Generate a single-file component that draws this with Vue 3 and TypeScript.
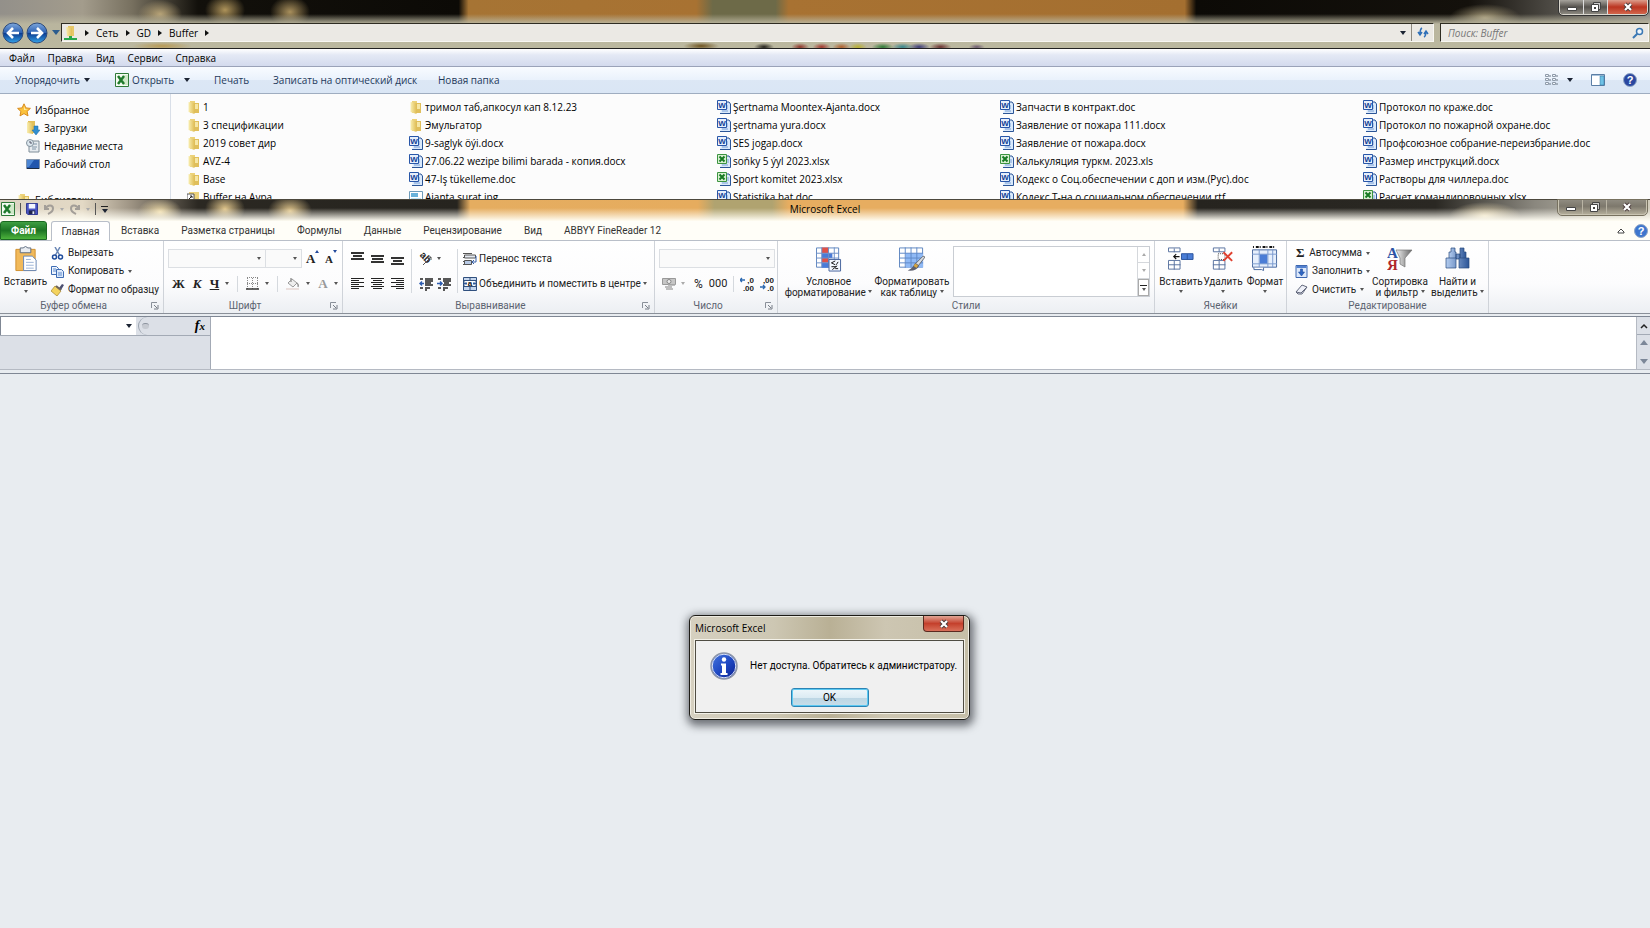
<script setup lang="ts">
type Kind = 'folder' | 'word' | 'excel' | 'image' | 'shortcut'
interface FileItem { name: string; kind: Kind }

const f = (kind: Kind, name: string): FileItem => ({ kind, name })

const columns: FileItem[][] = [
  [f('folder', '1'), f('folder', '3 спецификации'), f('folder', '2019 совет дир'), f('folder', 'AVZ-4'), f('folder', 'Base'), f('shortcut', 'Buffer на Аура')],
  [f('folder', 'тримол таб,апкосул кап 8.12.23'), f('folder', 'Эмульгатор'), f('word', '9-saglyk öýi.docx'), f('word', '27.06.22 wezipe bilimi barada - копия.docx'), f('word', '47-Iş tükelleme.doc'), f('image', 'Ajanta surat.jpg')],
  [f('word', 'Şertnama Moontex-Ajanta.docx'), f('word', 'şertnama yura.docx'), f('word', 'SES jogap.docx'), f('excel', 'soňky 5 ýyl 2023.xlsx'), f('excel', 'Sport komitet 2023.xlsx'), f('word', 'Statistika hat.doc')],
  [f('word', 'Запчасти в контракт.doc'), f('word', 'Заявление от пожара 111.docx'), f('word', 'Заявление от пожара.docx'), f('excel', 'Калькуляция туркм. 2023.xls'), f('word', 'Кодекс о Соц.обеспечении с доп и изм.(Рус).doc'), f('word', 'Кодекс Т-на о социальном обеспечении.rtf')],
  [f('word', 'Протокол по краже.doc'), f('word', 'Протокол по пожарной охране.doc'), f('word', 'Профсоюзное собрание-переизбрание.doc'), f('word', 'Размер инструкций.docx'), f('word', 'Растворы для чиллера.doc'), f('excel', 'Расчет командировочных.xlsx')],
]

const crumbs = ['Сеть', 'GD', 'Buffer']
const menu = ['Файл', 'Правка', 'Вид', 'Сервис', 'Справка']
const places = [
  { icon: 'downloads', name: 'Загрузки' },
  { icon: 'recent', name: 'Недавние места' },
  { icon: 'desktop', name: 'Рабочий стол' },
]
const tabs = ['Вставка', 'Разметка страницы', 'Формулы', 'Данные', 'Рецензирование', 'Вид', 'ABBYY FineReader 12']
</script>

<template>
  <svg class="sprite" aria-hidden="true">
    <defs>
      <linearGradient id="gFolder" x1="0" x2="1"><stop offset="0" stop-color="#f9eeb0" /><stop offset="1" stop-color="#dfbd55" /></linearGradient>
      <linearGradient id="gBlue" x1="0" x2="0" y1="0" y2="1"><stop offset="0" stop-color="#7fa8dc" /><stop offset=".48" stop-color="#2d62b4" /><stop offset=".52" stop-color="#0d3d90" /><stop offset="1" stop-color="#35a4ea" /></linearGradient>
      <linearGradient id="gInfo" x1="0" x2="1" y1="0" y2="1"><stop offset="0" stop-color="#4a7be0" /><stop offset=".5" stop-color="#1f49c4" /><stop offset="1" stop-color="#0b1f8e" /></linearGradient>
      <linearGradient id="gBin" x1="0" x2="1"><stop offset="0" stop-color="#b4cdf0" /><stop offset="1" stop-color="#2c5597" /></linearGradient>
      <linearGradient id="gFunnel" x1="0" x2="1"><stop offset="0" stop-color="#f2f2f2" /><stop offset="1" stop-color="#666" /></linearGradient>
      <symbol id="folder" viewBox="0 0 14 14"><path d="M3 1h5v12H3z" fill="#ecd27a" /><path d="M7 3h5v10H7z" fill="#e0bf5c" /><path d="M1.500 2l6 1v11l-6-2z" fill="url(#gFolder)" /><path d="M8 4h3v5H8z" fill="#f6e7a6" /></symbol>
      <symbol id="shortcut" viewBox="0 0 14 14"><path d="M2 2h10v11H2z" fill="#ecd27a" /><path d="M0 4h7v8H0z" fill="#fff" stroke="#555" /><path d="M2 9l3-3M3 6h2v2" stroke="#222" fill="none" /></symbol>
      <symbol id="word" viewBox="0 0 14 14"><path d="M6 2h6l1.500 2v9.500H3" fill="#d9e9fb" stroke="#2b5597" /><path d="M7 6h4M7 8h4M5 11h6" stroke="#7ba0d6" /><path d="M.5.500h9v9h-9z" fill="#e6effb" stroke="#2856a8" /><text x="5" y="8" text-anchor="middle" font-size="8" font-weight="700" font-family="Liberation Sans" fill="#123f96">W</text></symbol>
      <symbol id="excel" viewBox="0 0 14 14"><path d="M6 2h6l1.500 2v9.500H3" fill="#dceafa" stroke="#2b5597" /><path d="M9 6h3M9 8h3M5 11h6" stroke="#7ba0d6" /><path d="M.5.500h9v9h-9z" fill="#d9f0d2" stroke="#3c9440" /><path d="M2.500 2.500l5 5m0-5l-5 5" stroke="#177a22" stroke-width="2" /></symbol>
      <symbol id="image" viewBox="0 0 14 14"><path d="M.5 1.500h13v11H.5z" fill="#fff" stroke="#6e9cba" /><path d="M2 3h7v4H2z" fill="#68b2da" /><path d="M2 8h10v3H2z" fill="#bfe4f5" /></symbol>
      <symbol id="network" viewBox="0 0 14 14"><path d="M4 0h6v10H4z" fill="#e7c868" /><path d="M2 1l6 1v9l-5-1z" fill="url(#gFolder)" /><path d="M5 10h3v2h5v2H0v-2h5z" fill="#28a84b" /></symbol>
      <symbol id="xl" viewBox="0 0 14 14"><path d="M.5.500h13v13H.5z" fill="#f4fbf1" stroke="#2f7a38" /><path d="M8 2h5v10H8z" fill="#cfe8c8" /><path d="M3 3l6 8M9 3l-6 8" stroke="#1f7a2b" stroke-width="2.500" /></symbol>
      <symbol id="star" viewBox="0 0 14 14"><path d="M7 .8l1.900 4.100 4.500.5-3.300 3 .9 4.500L7 10.600l-4 2.300.9-4.500-3.300-3 4.500-.5z" fill="#fbc23c" stroke="#d88a1c" /><path d="M7 3l1 3 3 .5-4 .5z" fill="#fff0b0" /></symbol>
      <symbol id="downloads" viewBox="0 0 14 14"><path d="M2 0h7v12H2z" fill="#e3bf58" /><path d="M1 1l6 1v11l-6-1z" fill="url(#gFolder)" /><path d="M8 5h4v4h2l-4 5-4-5h2z" fill="#2f8ed0" stroke="#1a68a6" stroke-width=".5" /></symbol>
      <symbol id="recent" viewBox="0 0 14 14"><path d="M3 2h10v11H3z" fill="#e6ebef" stroke="#7f8d98" /><path d="M6 5h5M6 8h5M6 10h4" stroke="#8196a8" /><circle cx="4" cy="4" r="3.500" fill="#dde8ef" stroke="#84929d" /><path d="M4 2v2h2" stroke="#556" fill="none" /></symbol>
      <symbol id="desktop" viewBox="0 0 14 14"><path d="M.5 2.500h13v9H.5z" fill="#2156ae" stroke="#7e92ac" /><path d="M1 3h7L3 10H1z" fill="#4c86d4" /><path d="M1 11h12v1H1z" fill="#1c2a40" /></symbol>
      <symbol id="magnifier" viewBox="0 0 12 12"><circle cx="7.500" cy="4.500" r="3" fill="#eef5fb" stroke="#3a78b4" stroke-width="1.500" /><path d="M5.300 6.700L1 11" stroke="#3a78b4" stroke-width="2" /></symbol>
      <symbol id="refresh" viewBox="0 0 12 12"><path d="M5 1C3 2 3 4 3 7M1 5l2 3 2-3M7 10c2-1 2-3 2-6M7 7l2-3 2 3" stroke="#2f70b8" stroke-width="1.500" fill="none" /></symbol>
      <symbol id="views" viewBox="0 0 14 12"><g fill="#f3f7fc" stroke="#8e9aa9"><path d="M1.500.500h3v2h-3zM1.500 4.500h3v2h-3zM1.500 8.500h3v2h-3zM8.500.500h3v2h-3zM8.500 4.500h3v2h-3zM8.500 8.500h3v2h-3z" /></g><path d="M5 2h2M5 6h2M5 10h2M12 2h2M12 6h2M12 10h2" stroke="#6d7886" /></symbol>
      <symbol id="pane" viewBox="0 0 14 12"><path d="M.5.500h13v11H.5z" fill="#fff" stroke="#5b7ea5" /><path d="M1 1h12v1H1z" fill="#aac4dd" /><path d="M9 2h4v9H9z" fill="#6ec1e6" stroke="#32749c" stroke-width=".5" /></symbol>
      <symbol id="helpDark" viewBox="0 0 14 14"><circle cx="7" cy="7" r="6.500" fill="#2a47a0" stroke="#8fa5c4" /><text x="7" y="11" text-anchor="middle" font-size="11" font-weight="700" font-family="Liberation Sans" fill="#fff">?</text></symbol>
      <symbol id="help" viewBox="0 0 14 14"><circle cx="7" cy="7" r="6.500" fill="#3e76ce" stroke="#8fa5c4" /><text x="7" y="11" text-anchor="middle" font-size="11" font-weight="700" font-family="Liberation Sans" fill="#fff">?</text></symbol>
      <symbol id="min" viewBox="0 0 12 12"><path d="M1.500 6.500h9v3h-9z" fill="#fff" stroke="#444" /></symbol>
      <symbol id="restore" viewBox="0 0 12 12"><path d="M3.500 1.500h7v7h-7z" fill="#ccc" stroke="#444" /><path d="M1.500 3.500h7v7h-7z" fill="#fff" stroke="#444" /><path d="M4 6h2v2H4z" fill="#444" /></symbol>
      <symbol id="close" viewBox="0 0 12 12"><path d="M3 3l6 6M9 3L3 9" stroke="#4a3a3a" stroke-width="4" /><path d="M3 3l6 6M9 3L3 9" stroke="#fff" stroke-width="2.200" /></symbol>
      <symbol id="save" viewBox="0 0 13 13"><path d="M.5.500h12v12H2l-1.500-1.500z" fill="#4a55c4" stroke="#27308c" /><path d="M3 1h7v5H3z" fill="#f3f6ff" /><path d="M3 8h7v4H3z" fill="#20264e" /><path d="M7 9h2v3H7z" fill="#dfe5f5" /></symbol>
      <symbol id="undo" viewBox="0 0 12 12"><path d="M2 2v4h4M2.500 5.500C5 1 10 2 10 5.500S7 10 5 11" fill="none" stroke="#a39e98" stroke-width="2" /></symbol>
      <symbol id="redo" viewBox="0 0 12 12"><path d="M10 2v4H6M9.500 5.500C7 1 2 2 2 5.500S5 10 7 11" fill="none" stroke="#a39e98" stroke-width="2" /></symbol>
      <symbol id="paste" viewBox="0 0 24 27"><path d="M1.500 3.500h20v22h-20z" fill="#f1b95a" stroke="#cf8f2e" /><path d="M6 2h3q2.500-3 5 0h3v5H6z" fill="#e9edf2" stroke="#5e6c80" /><path d="M9.500 10.500h9l4 4v11h-13z" fill="#fff" stroke="#6886b4" /><path d="M12 14h5M12 17h8M12 20h8M12 23h8" stroke="#9db4d6" /></symbol>
      <symbol id="cut" viewBox="0 0 13 13"><path d="M4 0l4.500 8M9 0L4.500 8" stroke="#6a87b5" stroke-width="1.500" /><circle cx="3.500" cy="10" r="2" fill="none" stroke="#1e4c9c" stroke-width="1.500" /><circle cx="9.500" cy="10" r="2" fill="none" stroke="#1e4c9c" stroke-width="1.500" /></symbol>
      <symbol id="copy" viewBox="0 0 13 13"><path d="M.5 1.500h5l2 2v6h-7z" fill="#eef4fd" stroke="#3e6cb4" /><path d="M5.500 4.500h5l2 2v6h-7z" fill="#dbe8fa" stroke="#3e6cb4" /><path d="M7 8h4M7 10h4M2 4h3M2 6h3" stroke="#5d89cc" /></symbol>
      <symbol id="brush" viewBox="0 0 13 13"><path d="M8 5l3-4 2 1-3 5z" fill="#4a4e70" /><path d="M4 3l6 5-4 5-6-5z" fill="#f4d35e" stroke="#a5842d" stroke-width=".7" /><path d="M5 3l5 4" stroke="#6e655c" stroke-width="2" /></symbol>
      <symbol id="launch" viewBox="0 0 8 8"><path d="M.5 6V.5H6" fill="none" stroke="#8a9099" /><path d="M3 3l3 3M7 3v4H3" fill="none" stroke="#777d86" /></symbol>
      <symbol id="borders" viewBox="0 0 13 13"><path d="M1 .5h11M1 6.500h11M1.500 1v11M6.500 1v11M11.500 1v11" stroke="#888" stroke-dasharray="1 1" /><path d="M0 12h13" stroke="#333" stroke-width="1.500" /></symbol>
      <symbol id="fill" viewBox="0 0 14 14"><path d="M2 6l4-4 5 4-4 4z" fill="#eee" stroke="#999" /><path d="M5 5V1M11 6q2 2 1 4" stroke="#999" stroke-width="1.500" fill="none" /><path d="M0 11h13v2H0z" fill="#eadfdd" /></symbol>
      <symbol id="top" viewBox="0 0 13 13"><path d="M0 1h13M2 4h9M0 7h13" stroke="#333" stroke-width="2" /></symbol>
      <symbol id="middle" viewBox="0 0 13 13"><path d="M0 4h13M1 7h11M0 10h13" stroke="#333" stroke-width="2" /></symbol>
      <symbol id="bottom" viewBox="0 0 13 13"><path d="M0 6h13M2 9h9M0 12h13" stroke="#333" stroke-width="2" /></symbol>
      <symbol id="left" viewBox="0 0 13 13"><path d="M0 1.500h13M0 3.500h8M0 5.500h13M0 7.500h8M0 9.500h13M0 11.500h8" stroke="#222" /></symbol>
      <symbol id="center" viewBox="0 0 13 13"><path d="M0 1.500h13M2 3.500h9M0 5.500h13M2 7.500h9M0 9.500h13M2 11.500h9" stroke="#222" /></symbol>
      <symbol id="right" viewBox="0 0 13 13"><path d="M0 1.500h13M5 3.500h8M0 5.500h13M5 7.500h8M0 9.500h13M5 11.500h8" stroke="#222" /></symbol>
      <symbol id="outdent" viewBox="0 0 14 13"><path d="M1 1.500h3M6 1.500h8M6 3.500h8M6 5.500h6M6 7.500h8M1 10.500h3M6 10.500h5M6 12.500h2" stroke="#222" stroke-width="1.300" /><path d="M5 6H1m2-2L1 6l2 2" stroke="#2d5cb0" fill="none" stroke-width="1.500" /></symbol>
      <symbol id="indent" viewBox="0 0 14 13"><path d="M1 1.500h3M6 1.500h8M6 3.500h8M7 5.500h5M6 7.500h8M1 10.500h3M6 10.500h5M6 12.500h2" stroke="#222" stroke-width="1.300" /><path d="M0 6h5M3 4l2 2-2 2" stroke="#2d5cb0" fill="none" stroke-width="1.500" /></symbol>
      <symbol id="orient" viewBox="0 0 14 14"><text x="0" y="6" transform="rotate(45 3 5)" font-size="10" font-weight="700" font-family="Liberation Sans" fill="#222">ab</text><path d="M4 13l8-8M9 5h3v3" stroke="#555" fill="none" /></symbol>
      <symbol id="wrap" viewBox="0 0 14 14"><path d="M0 1.500h9M0 5.500h9M0 9.500h7M0 12.500h7" stroke="#555" /><path d="M1.500 3h11v3h-11z" fill="#e4e9f1" stroke="#555" /><path d="M1.500 8.500h7v4h-7z" fill="#b8cae6" stroke="#555" /><path d="M13 4v6H9m2-2l-2 2 2 2" fill="none" stroke="#355fa8" /></symbol>
      <symbol id="merge" viewBox="0 0 14 14"><path d="M.5.500h13v13H.5zM7 0v3M7 10v4" fill="#c5d6ee" stroke="#30507e" /><path d="M1 3.500h12v6H1z" fill="#fff" stroke="#30507e" /><path d="M1 6.500h3M10 6.500h3M3 5v3M11 5v3" stroke="#315b9d" /><text x="7" y="9" text-anchor="middle" font-size="8" font-weight="700" font-family="Liberation Sans" fill="#111">a</text></symbol>
      <symbol id="money" viewBox="0 0 14 14"><path d="M.5 1.500h13v6H.5z" fill="#c6c6c6" stroke="#999" /><circle cx="7" cy="4.500" r="2" fill="#eee" stroke="#888" /><path d="M3 10h7M4 12h7M6 8h7" stroke="#aaa" stroke-width="1.500" /></symbol>
      <symbol id="decInc" viewBox="0 0 14 14"><path d="M0 3h5M2 1L0 3l2 2" stroke="#2c69b0" fill="none" stroke-width="1.300" /><text x="14" y="6" text-anchor="end" font-size="8" font-weight="700" font-family="Liberation Sans" fill="#222">,0</text><text x="14" y="14" text-anchor="end" font-size="8" font-weight="700" font-family="Liberation Sans" fill="#222">,00</text></symbol>
      <symbol id="decDec" viewBox="0 0 14 14"><path d="M0 10h5M3 8l2 2-2 2" stroke="#2c69b0" fill="none" stroke-width="1.300" /><text x="14" y="6" text-anchor="end" font-size="8" font-weight="700" font-family="Liberation Sans" fill="#222">,00</text><text x="14" y="14" text-anchor="end" font-size="8" font-weight="700" font-family="Liberation Sans" fill="#222">,0</text></symbol>
      <symbol id="cond" viewBox="0 0 27 26"><path d="M.5 1.500h23v20H.5z" fill="#fff" stroke="#5d84be" /><path d="M6 1h7v6H6zM6 12h7v5H6z" fill="#df5148" /><path d="M6 7h11v5H6zM6 17h7v5H6z" fill="#4a7bd8" /><path d="M0 7h24M0 12h24M0 17h24M6 1v21M13 1v21M19 1v21" stroke="#6d90c8" /><path d="M13.500 13.500h12v12h-12z" fill="#f4f8ff" stroke="#45639c" /><path d="M20 15l-4 2 4 2M16 21h5M23 16l-2 3M17 24l5-4M23 23h-3" stroke="#111" fill="none" /></symbol>
      <symbol id="table" viewBox="0 0 27 26"><path d="M.5 1.500h24v20H.5z" fill="#fff" stroke="#5d84be" /><path d="M7 7h18v15H7z" fill="#8fb9f5" /><path d="M0 7h25M0 12h25M0 17h25M6.500 1v21M12.500 1v21M18.500 1v21" stroke="#5f88c8" /><path d="M25 10l2 1-7 9-3-2z" fill="#d9dde3" stroke="#555" stroke-width=".8" /><path d="M17 17l4 3q-3 6-12 5 5-2 8-8z" fill="#5e6170" /><path d="M16 19l3 2" stroke="#d6a53c" stroke-width="3" /></symbol>
      <symbol id="insCell" viewBox="0 0 27 26"><path d="M.5 1.500h12v4H.5zM.5 14.500h12v9H.5zM6.500 2v4M6.500 15v9M0 19h13" fill="#fff" stroke="#58739f" /><path d="M14 7.500h12v6H14zM20 8v6" fill="#4a7dd6" stroke="#2b539c" /><path d="M6 10.500h6M8.500 8L6 10.500 8.500 13" stroke="#111" fill="none" stroke-width="1.200" /></symbol>
      <symbol id="delCell" viewBox="0 0 27 26"><path d="M3.500 1.500h12v4h-12zM3.500 14.500h12v9h-12zM9.500 2v4M9.500 15v9M3 19h13" fill="#fff" stroke="#58739f" /><path d="M8.500 7.500h7v6h-7z" fill="none" stroke="#444" stroke-dasharray="1 1" /><path d="M14 6l9 9M23 6l-9 9" stroke="#e0402f" stroke-width="2" /></symbol>
      <symbol id="fmtCell" viewBox="0 0 27 26"><path d="M1 .5h22" stroke="#111" stroke-dasharray="1 2 3 1" stroke-width="2" /><path d="M.5 3.500h25v18H.5z" fill="#e6effc" stroke="#48689e" /><path d="M8 8h8v10H8z" fill="#4a7dd6" /><path d="M0 8h26M0 18h26M7.500 3v19M16.500 3v19M21.500 3v19" stroke="#7b9bcf" /><path d="M2 22v2h8l2 1V22" fill="#fff" stroke="#48689e" /></symbol>
      <symbol id="fillDown" viewBox="0 0 12 13"><path d="M.5.500h11v12H.5z" fill="#dce8fb" stroke="#3d67b0" /><path d="M1 1h10v2H1z" fill="#5280cf" /><path d="M5 4h2v3h2l-3 4-3-4h2z" fill="#2f66c4" stroke="#1e4c9c" stroke-width=".6" /></symbol>
      <symbol id="eraser" viewBox="0 0 13 11"><path d="M1 8l6-7 5 2-5 7H3z" fill="#eef0f8" stroke="#63697d" /><path d="M1 8l5 1 6-6" stroke="#63697d" fill="none" /></symbol>
      <symbol id="sort" viewBox="0 0 26 26"><text x="0" y="12" font-size="15" font-weight="700" font-family="Liberation Serif" fill="#2c54a4">А</text><path d="M9 4h16l-7 8v9l-5-3v-6z" fill="url(#gFunnel)" stroke="#777" stroke-width=".7" /><text x="0" y="24" font-size="15" font-weight="700" font-family="Liberation Serif" fill="#b0272c">Я</text></symbol>
      <symbol id="find" viewBox="0 0 26 26"><path d="M6 2h4v4h1v7H4V6h2zM15 2h4v4h2v7h-6zM11 8h4v5h-4z" fill="url(#gBin)" stroke="#2a4a80" stroke-width=".7" /><path d="M1 12h10v10H1zM14 12h10v10H14z" fill="url(#gBin)" stroke="#2a4a80" stroke-width=".7" /></symbol>
      <symbol id="info" viewBox="0 0 28 28"><circle cx="14" cy="14" r="13" fill="url(#gInfo)" stroke="#8f97a8" stroke-width="1.500" /><circle cx="14" cy="14" r="11.800" fill="none" stroke="#dde4f5" /><circle cx="14" cy="7.500" r="2.200" fill="#fff" /><path d="M11 11.500h5V21h1.500v2h-7v-2H12v-7.500h-1z" fill="#fff" /></symbol>
      <symbol id="back" viewBox="0 0 22 22"><circle cx="11" cy="11" r="10" fill="url(#gBlue)" stroke="#2c4a7c" /><path d="M17 11H6m5-5l-5 5 5 5" fill="none" stroke="#fff" stroke-width="2.600" /></symbol>
      <symbol id="forward" viewBox="0 0 22 22"><circle cx="11" cy="11" r="10" fill="url(#gBlue)" stroke="#2c4a7c" /><path d="M5 11h11m-5-5l5 5-5 5" fill="none" stroke="#fff" stroke-width="2.600" /></symbol>
    </defs>
  </svg>

  <main class="screen">
    <section class="explorer" aria-label="Buffer">
      <div class="frame">
        <div class="caption">
          <div class="winbtns">
            <button aria-label="Свернуть"><svg class="i12"><use href="#min" /></svg></button>
            <button aria-label="Восстановить"><svg class="i12"><use href="#restore" /></svg></button>
            <button class="red" aria-label="Закрыть"><svg class="i12"><use href="#close" /></svg></button>
          </div>
        </div>
        <div class="addressrow">
          <button class="nav" aria-label="Назад"><svg class="i22"><use href="#back" /></svg></button>
          <button class="nav" aria-label="Вперед"><svg class="i22"><use href="#forward" /></svg></button>
          <button class="recentbtn" aria-label="Последние страницы"><i class="tri blue"></i></button>
          <nav class="address" aria-label="Адрес">
            <svg class="i14"><use href="#network" /></svg>
            <i class="rtri first"></i>
            <template v-for="c in crumbs" :key="c"><a href="#">{{ c }}</a><i class="rtri"></i></template>
            <button class="addrdrop" aria-label="Предыдущие расположения"><i class="tri"></i></button>
            <button class="refresh" aria-label="Обновить"><svg class="i12"><use href="#refresh" /></svg></button>
          </nav>
          <label class="search"><input type="search" placeholder="Поиск: Buffer" aria-label="Поиск" /><svg class="i12"><use href="#magnifier" /></svg></label>
        </div>
      </div>
      <div class="menubar"><button v-for="m in menu" :key="m">{{ m }}</button></div>
      <div class="toolbar">
        <button class="t1">Упорядочить <i class="tri"></i></button>
        <button class="t2"><svg class="i14"><use href="#xl" /></svg>Открыть <i class="tri wide"></i></button>
        <button class="t3">Печать</button>
        <button class="t4">Записать на оптический диск</button>
        <button>Новая папка</button>
        <div class="toolsright">
          <button aria-label="Вид"><svg class="views"><use href="#views" /></svg><i class="tri"></i></button>
          <button aria-label="Область просмотра"><svg class="views"><use href="#pane" /></svg></button>
          <button aria-label="Справка"><svg class="i14"><use href="#helpDark" /></svg></button>
        </div>
      </div>
      <div class="body">
        <nav class="side">
          <a href="#" class="head"><svg class="i14"><use href="#star" /></svg>Избранное</a>
          <a v-for="p in places" :key="p.name" href="#"><svg class="i14"><use :href="'#' + p.icon" /></svg>{{ p.name }}</a>
          <a href="#" class="head libs"><svg class="i14"><use href="#folder" /></svg>Библиотеки</a>
        </nav>
        <div class="files">
          <ul v-for="(col, i) in columns" :key="i">
            <li v-for="file in col" :key="file.name"><svg class="i14"><use :href="'#' + file.kind" /></svg>{{ file.name }}</li>
          </ul>
        </div>
      </div>
    </section>

    <section class="excel" aria-label="Microsoft Excel">
      <header class="xtitle">
        <div class="qat">
          <svg class="i14"><use href="#xl" /></svg><i class="vline"></i>
          <button aria-label="Сохранить"><svg class="i12"><use href="#save" /></svg></button>
          <button aria-label="Отменить"><svg class="i12"><use href="#undo" /></svg><i class="tri s dim"></i></button>
          <button aria-label="Вернуть"><svg class="i12"><use href="#redo" /></svg><i class="tri s dim"></i></button>
          <i class="vline"></i>
          <button class="more" aria-label="Настройка панели быстрого доступа"><i class="tri"></i></button>
        </div>
        <h1>Microsoft Excel</h1>
        <div class="winbtns pale">
          <button aria-label="Свернуть"><svg class="i12"><use href="#min" /></svg></button>
          <button aria-label="Восстановить"><svg class="i12"><use href="#restore" /></svg></button>
          <button aria-label="Закрыть"><svg class="i12"><use href="#close" /></svg></button>
        </div>
      </header>
      <div class="tabs">
        <button class="filetab">Файл</button>
        <button class="active">Главная</button>
        <button v-for="t in tabs" :key="t">{{ t }}</button>
        <div class="tabsright">
          <button aria-label="Свернуть ленту"><svg class="chev" viewBox="0 0 8 6"><path d="M1 5V4l3-3 3 3v1z" fill="#fff" stroke="#444" /></svg></button>
          <button aria-label="Справка"><svg class="i14"><use href="#help" /></svg></button>
        </div>
      </div>

      <div class="ribbon">
        <section class="group clip">
          <div class="content">
            <button class="big"><svg class="i26"><use href="#paste" /></svg><span>Вставить</span><i class="tri s"></i></button>
            <div class="stack">
              <button><svg class="i13"><use href="#cut" /></svg>Вырезать</button>
              <button><svg class="i13"><use href="#copy" /></svg>Копировать <i class="tri s"></i></button>
              <button><svg class="i13"><use href="#brush" /></svg>Формат по образцу</button>
            </div>
          </div>
          <footer>Буфер обмена<svg class="launch"><use href="#launch" /></svg></footer>
        </section>

        <section class="group font">
          <div class="content rows">
            <div class="row combos">
              <span class="combo wide"><select aria-label="Шрифт"></select><i class="tri s"></i></span>
              <span class="combo size"><select aria-label="Размер"></select><i class="tri s"></i></span>
              <button class="serif grow">A<i class="up"></i></button>
              <button class="serif shrink">A<i class="tri s navy"></i></button>
            </div>
            <div class="row fontrow">
              <button class="serif">Ж</button>
              <button class="serif it">К</button>
              <button class="serif"><u>Ч</u><i class="tri s"></i></button>
              <i class="sep"></i>
              <button aria-label="Границы"><svg class="i13"><use href="#borders" /></svg><i class="tri s"></i></button>
              <i class="sep"></i>
              <button aria-label="Заливка"><svg class="i14"><use href="#fill" /></svg><i class="tri s"></i></button>
              <button class="serif gray">A<i class="tri s"></i></button>
            </div>
          </div>
          <footer>Шрифт<svg class="launch"><use href="#launch" /></svg></footer>
        </section>

        <section class="group align">
          <div class="content">
            <div class="icongrid">
              <button v-for="k in ['top', 'middle', 'bottom', 'left', 'center', 'right']" :key="k" :aria-label="k"><svg class="i13"><use :href="'#' + k" /></svg></button>
            </div>
            <i class="sep tall"></i>
            <div class="orient">
              <button aria-label="Ориентация"><svg class="i14"><use href="#orient" /></svg><i class="tri s"></i></button>
              <div><button aria-label="Уменьшить отступ"><svg class="i14"><use href="#outdent" /></svg></button><button aria-label="Увеличить отступ"><svg class="i14"><use href="#indent" /></svg></button></div>
            </div>
            <i class="sep tall"></i>
            <div class="stack two">
              <button><svg class="i14"><use href="#wrap" /></svg>Перенос текста</button>
              <button><svg class="i14"><use href="#merge" /></svg>Объединить и поместить в центре <i class="tri s"></i></button>
            </div>
          </div>
          <footer>Выравнивание<svg class="launch"><use href="#launch" /></svg></footer>
        </section>

        <section class="group num">
          <div class="content rows">
            <div class="row"><span class="combo full"><select aria-label="Числовой формат"></select><i class="tri s"></i></span></div>
            <div class="row numrow">
              <button aria-label="Финансовый формат"><svg class="i14"><use href="#money" /></svg><i class="tri s dim"></i></button>
              <button class="percent">%</button>
              <button class="zeros">000</button>
              <i class="sep"></i>
              <button aria-label="Увеличить разрядность"><svg class="i14"><use href="#decInc" /></svg></button>
              <button aria-label="Уменьшить разрядность"><svg class="i14"><use href="#decDec" /></svg></button>
            </div>
          </div>
          <footer>Число<svg class="launch"><use href="#launch" /></svg></footer>
        </section>

        <section class="group styles">
          <div class="content">
            <button class="big w1"><svg class="i26"><use href="#cond" /></svg><span>Условное</span><span>форматирование <i class="tri s"></i></span></button>
            <button class="big w2"><svg class="i26"><use href="#table" /></svg><span>Форматировать</span><span>как таблицу <i class="tri s"></i></span></button>
            <div class="gallery">
              <div class="galbtns">
                <button aria-label="Вверх"><i class="up dim"></i></button>
                <button aria-label="Вниз"><i class="tri s dim"></i></button>
                <button class="more" aria-label="Дополнительно"><i class="tri s"></i></button>
              </div>
            </div>
          </div>
          <footer>Стили</footer>
        </section>

        <section class="group cells">
          <div class="content">
            <button class="big"><svg class="i26"><use href="#insCell" /></svg><span>Вставить</span><i class="tri s"></i></button>
            <button class="big"><svg class="i26"><use href="#delCell" /></svg><span>Удалить</span><i class="tri s"></i></button>
            <button class="big"><svg class="i26"><use href="#fmtCell" /></svg><span>Формат</span><i class="tri s"></i></button>
          </div>
          <footer>Ячейки</footer>
        </section>

        <section class="group edit">
          <div class="content">
            <div class="stack">
              <button><b class="sigma">Σ</b>Автосумма <i class="tri s"></i></button>
              <button><svg class="i13"><use href="#fillDown" /></svg>Заполнить <i class="tri s"></i></button>
              <button><svg class="i13"><use href="#eraser" /></svg>Очистить <i class="tri s"></i></button>
            </div>
            <button class="big w3"><svg class="i26"><use href="#sort" /></svg><span>Сортировка</span><span>и фильтр <i class="tri s"></i></span></button>
            <button class="big w4"><svg class="i26"><use href="#find" /></svg><span>Найти и</span><span>выделить <i class="tri s"></i></span></button>
          </div>
          <footer>Редактирование</footer>
        </section>
      </div>

      <div class="formula">
        <div class="namecol">
          <div class="namerow">
            <span class="namebox"><input aria-label="Имя" /><i class="tri"></i></span>
            <span class="fxzone"><i class="knob"></i><button class="fx" aria-label="Вставить функцию">f<small>x</small></button></span>
          </div>
        </div>
        <textarea class="fxinput" aria-label="Строка формул"></textarea>
        <div class="fxscroll">
          <button aria-label="Свернуть строку формул"><svg class="chev" viewBox="0 0 8 6"><path d="M1 5l3-3 3 3" fill="none" stroke="#222" stroke-width="1.500" /></svg></button>
          <div><i class="up steel"></i><i class="tri steel"></i></div>
        </div>
      </div>

      <div class="workspace">
        <div class="dialog" role="dialog" aria-labelledby="dlg">
          <div class="dlgtitle"><span id="dlg">Microsoft Excel</span><button class="dlgclose" aria-label="Закрыть"><svg class="i12"><use href="#close" /></svg></button></div>
          <div class="dlgbody">
            <div class="msg"><svg class="i28"><use href="#info" /></svg><p>Нет доступа. Обратитесь к администратору.</p></div>
            <button class="ok">OK</button>
          </div>
        </div>
      </div>
    </section>
  </main>
</template>

<style>
body { margin: 0; background: #e8ecf0; }
</style>

<style scoped>
* { box-sizing: border-box; }
.sprite { position: absolute; width: 0; height: 0; }
.screen { display: flex; flex-direction: column; min-height: 100vh; font: 10px/18px "Open Sans", "Noto Sans", sans-serif; color: #000; overflow: hidden; }
button { font: inherit; color: inherit; background: none; border: 0; padding: 0; display: flex; align-items: center; white-space: nowrap; }
a { color: inherit; text-decoration: none; }
svg { display: block; flex: none; }
i { flex: none; }
.i12 { width: 12px; height: 12px; }
.i13 { width: 13px; height: 13px; }
.i14 { width: 14px; height: 14px; }
.i22 { width: 22px; height: 22px; }
.i26 { width: 26px; height: 26px; }
.i28 { width: 28px; height: 28px; }
.tri { display: inline-block; border: 3px solid transparent; border-top: 4px solid #1c2433; border-bottom: 0; }
.tri.s { border-width: 3px 2px 0; border-top-color: #555; }
.tri.dim { border-top-color: #aaa; }
.tri.blue { border-width: 5px 4px 0; border-top-color: #2b5c8e; }
.tri.navy { border-top-color: #234a9c; }
.up { display: inline-block; border: 2px solid transparent; border-bottom: 3px solid #234a9c; border-top: 0; }
.up.dim { border-bottom-color: #aaa; }
.tri.steel { border-width: 5px 4px 0; border-top-color: #7c8798; }
.up.steel { border-width: 0 4px 5px; border-bottom-color: #7c8798; }
.rtri { border: 3px solid transparent; border-left: 4px solid #111; border-right: 0; margin: 0 7px; }

.explorer { height: 199px; display: flex; flex-direction: column; overflow: hidden; background: #fcfcfc; }
.frame {
  height: 49px; border-bottom: 1px solid #222;
  background:
    radial-gradient(ellipse 30px 4px at 162px 46px, #b89a55, transparent),
    radial-gradient(ellipse 18px 4px at 42.500% 46px, #6e531f, transparent),
    radial-gradient(ellipse 10px 4px at 46.300% 47px, #22201a, transparent),
    radial-gradient(ellipse 9px 4px at 48.500% 47px, #8f3328, transparent),
    radial-gradient(ellipse 9px 4px at 49.800% 47px, #a3352b, transparent),
    radial-gradient(ellipse 9px 4px at 51% 47px, #b0602c, transparent),
    radial-gradient(ellipse 9px 4px at 52% 47px, #b9b030, transparent),
    radial-gradient(ellipse 11px 4px at 53.500% 47px, #2d7a35, transparent),
    radial-gradient(ellipse 11px 4px at 54.700% 47px, #35858c, transparent),
    radial-gradient(ellipse 11px 4px at 55.700% 47px, #3a3a78, transparent),
    radial-gradient(ellipse 11px 4px at 57% 47px, #6b302f, transparent),
    radial-gradient(ellipse 8px 3px at 59.200% 47px, #6d5a70, transparent),
    linear-gradient(180deg, transparent 14px, #b9b59e 24px, #bbb89f 47px),
    radial-gradient(ellipse 22px 14px at 160px 14px, #b7a377, transparent),
    radial-gradient(ellipse 20px 16px at 225px 10px, #ae935a, transparent),
    radial-gradient(ellipse 20px 16px at 290px 12px, #a88f5c, transparent),
    radial-gradient(ellipse 36px 14px at 90% 18px, #a89c7a, transparent),
    linear-gradient(90deg, #93908a 0, #a39c8c 5%, #77705f 8%, #12100b 12%, #0c0a06 27.800%, #a67434 28.400%, #a87232 42.200%, #6d6a48 43.200%, #6d6a48 47%, #a87232 47.800%, #a46f30 71.800%, #0c0a06 72.500%, #14110c 89%, #4d4a44 94%, #8d8b86 100%);
}
.caption { height: 23px; display: flex; justify-content: flex-end; padding-right: 2px; }
.winbtns { display: flex; height: 15px; border: 1px solid #d8d5cc; border-top: 0; border-radius: 0 0 4px 4px; overflow: hidden; outline: 1px solid #333; }
.winbtns button { width: 24px; justify-content: center; background: linear-gradient(#a5a29c, #55524d 50%, #8c8981); border-right: 1px solid #ddd; }
.winbtns button.red { width: 39px; border: 0; background: linear-gradient(#dc9d8b, #bb3521 50%, #d2664c); }
.winbtns.pale { outline-color: #77715f; border-color: #c9c4b2; }
.winbtns.pale button { background: linear-gradient(#8f8b80, #7d786c 45%, #b1ab98); border-color: #b9b4a4; }
.winbtns.pale button:last-child { width: 39px; border: 0; }
.addressrow { display: flex; height: 19px; align-items: center; padding: 0 1px 0 2px; }
.nav { margin-right: 2px; }
.recentbtn { width: 11px; justify-content: center; }
.address { flex: 1; height: 19px; margin-right: 6px; display: flex; align-items: center; background: #ebe9e4; border: 1px solid #f8f7f2; border-top-color: #2e2c22; border-left-color: #2e2c22; padding-left: 2px; }
.addrdrop { margin-left: auto; width: 18px; justify-content: center; height: 17px; border-right: 1px solid #8d8a80; }
.refresh { width: 21px; justify-content: center; height: 17px; }
.search { width: 209px; height: 19px; display: flex; align-items: center; background: #ebe9e4; border: 1px solid #f8f7f2; border-top-color: #2e2c22; border-left-color: #2e2c22; padding: 0 4px 0 7px; }
.search input { flex: 1; min-width: 0; border: 0; padding: 0; background: none; font: italic 10px "Open Sans", "Noto Sans", sans-serif; outline: 0; }
.search input::placeholder { color: #777; opacity: 1; }
.menubar { height: 18px; flex: none; display: flex; gap: 13px; padding-left: 9px; background: linear-gradient(#fff, #e4e9f5 35%, #d3daed); border-bottom: 1px solid #9aa2b8; }
.toolbar { height: 27px; flex: none; display: flex; align-items: center; padding-left: 15px; color: #1e395b; background: linear-gradient(#f8fbff, #eaf2fc 48%, #dce7f5 52%, #dae6f5); border-bottom: 1px solid #9fadc0; }
.toolbar .tri { margin-left: 4px; }
.toolbar .tri.wide { margin-left: 7px; }
.t1 { width: 100px; }
.t2 { width: 99px; gap: 3px; }
.t3 { width: 59px; }
.t4 { width: 165px; }
.toolsright { margin-left: auto; display: flex; align-items: center; gap: 18px; padding-right: 13px; }
.toolsright button:first-child .tri { margin-left: 9px; }
.views { width: 14px; height: 12px; }
.body { flex: 1; display: flex; min-height: 0; }
.side { width: 171px; flex: none; border-right: 1px solid #d9dfe8; padding-top: 7px; overflow: hidden; }
.side a { display: flex; align-items: center; gap: 4px; padding-left: 26px; height: 18px; }
.side a.head { padding-left: 17px; }
.side a.libs { margin-top: 18px; }
.files { flex: 1; display: grid; grid-template-columns: 222fr 308fr 283fr 363fr 287fr; padding: 4px 0 0 16px; overflow: hidden; }
ul { margin: 0; padding: 0; list-style: none; min-width: 0; }
li { display: flex; align-items: center; gap: 2px; height: 18px; white-space: nowrap; }

.excel { flex: 1; display: flex; flex-direction: column; position: relative; font-family: Roboto, "Noto Sans", sans-serif; }
.xtitle {
  height: 22px; display: grid; grid-template-columns: 1fr auto 1fr; border-top: 1px solid #4c483d;
  background:
    linear-gradient(180deg, transparent 8px, #fffdf3 21px),
    radial-gradient(ellipse 22px 14px at 160px 12px, #f1ddaa, transparent),
    radial-gradient(ellipse 20px 16px at 225px 9px, #e0c58b, transparent),
    radial-gradient(ellipse 22px 16px at 290px 11px, #e0c58b, transparent),
    radial-gradient(ellipse 36px 14px at 90% 16px, #eadbb6, transparent),
    linear-gradient(90deg, #dcd3c2 0, #e3d9c5 5%, #9c9282 8%, #2b2822 12%, #26241f 27.700%, #e5ad60 28.500%, #e6ac5e 42.300%, #b0a370 43.300%, #b0a370 46.800%, #e7ad60 47.800%, #e7ad60 71.700%, #26241f 72.600%, #2a2823 87%, #8a877e 93%, #d0cbbb 100%);
}
.xtitle h1 { margin: 0; font: 10px/19px "Open Sans", "Noto Sans", sans-serif; }
.xtitle .winbtns { justify-self: end; margin-right: 3px; }
.qat { display: flex; align-items: center; gap: 5px; padding-left: 1px; height: 18px; }
.qat button { gap: 5px; }
.vline { width: 1px; height: 12px; background: #555; }
.more { flex-direction: column; border: 0; }
.more::before { content: ""; width: 7px; border-top: 1px solid #222; margin-bottom: 2px; }
.qat .more, .galbtns .more { gap: 0; }
.tabs { display: flex; height: 20px; background: #fffef8; color: #333; border-bottom: 1px solid #b9bfc9; }
.tabs > button { padding: 0 11px; }
.tabs .filetab { width: 47px; padding: 0; justify-content: center; color: #fff; font-weight: 700; background: linear-gradient(#3f9f43, #1d7423 50%, #4cb33c); border: 1px solid #1b6a21; border-radius: 3px 3px 0 0; margin-right: 4px; }
.tabs .active { width: 59px; height: 20px; padding: 0; justify-content: center; background: #fff; border: 1px solid #b9bfc9; border-bottom: 0; border-radius: 3px 3px 0 0; }
.tabsright { margin-left: auto; display: flex; gap: 9px; padding-right: 2px; }
.chev { width: 8px; height: 6px; }

.ribbon { display: flex; height: 73px; background: linear-gradient(#fff, #fcfcfd 60%, #eceff3); border-bottom: 1px solid #8a9099; color: #222; }
.group { display: flex; flex-direction: column; border-right: 1px solid #cfd3d9; flex: none; }
.group footer { position: relative; height: 14px; line-height: 14px; margin-top: auto; padding-right: 16px; text-align: center; color: #5c6370; }
.styles footer, .cells footer, .edit footer { padding-right: 0; }
.launch { position: absolute; right: 4px; top: 3px; width: 8px; height: 8px; }
.content { display: flex; height: 58px; }
.big { flex-direction: column; line-height: 11px; padding-top: 5px; justify-content: flex-start; }
.big .i26 { margin-bottom: 4px; }
.big > .tri { margin-top: 3px; }
.big span .tri { margin-bottom: 3px; }
.stack { display: flex; flex-direction: column; padding-top: 3px; }
.stack button { height: 19px; gap: 4px; }
.stack.two { padding: 5px 0 0 5px; }
.stack.two button { height: 25px; gap: 2px; }
.clip { width: 164px; }
.clip .big { width: 51px; }
.font { width: 179px; }
.align { width: 312px; }
.num { width: 123px; }
.styles { width: 377px; }
.cells { width: 132px; }
.edit { width: 202px; }
.rows { flex-direction: column; }
.row { display: flex; align-items: center; height: 19px; margin: 8px 0 0 4px; }
.row + .row { margin-top: 6px; }
.combo { display: flex; align-items: center; height: 19px; border: 1px solid #dcdfe3; background: #fafafa; padding-right: 4px; }
.combo select { flex: 1; min-width: 0; width: 0; height: 16px; border: 0; background: none; appearance: none; }
.combo.wide { width: 97px; border-right: 0; }
.combo.size { width: 37px; }
.combo.full { width: 116px; }
.serif { font: 700 13px/18px "Liberation Serif", serif; }
.serif.it { font-style: italic; }
.serif.gray { color: #999; }
.serif.grow { margin-left: 4px; width: 19px; align-items: flex-start; }
.serif.shrink { font-size: 11px; align-items: flex-start; }
.fontrow { gap: 8px; padding-left: 4px; }
.fontrow button { gap: 6px; }
.sep { width: 1px; height: 16px; background: #d5d9de; }
.sep.tall { height: 44px; margin-top: 8px; }
.icongrid { width: 68px; flex: none; display: grid; grid-template-columns: repeat(3, 20px); grid-template-rows: 25px 25px; padding: 5px 0 0 8px; }
.orient { width: 45px; flex: none; display: flex; flex-direction: column; padding: 5px 0 0 7px; }
.orient > * { height: 25px; display: flex; align-items: center; gap: 4px; }
.numrow { padding-left: 3px; gap: 6px; }
.numrow button { gap: 5px; }
.numrow .percent { margin-left: 3px; font-size: 12px; }
.numrow .zeros { font-size: 11px; }
.w1 { width: 101px; }
.w2 { width: 66px; align-items: center; }
.w3 { width: 60px; }
.w4 { width: 55px; }
.gallery { width: 197px; height: 51px; margin: 5px 0 0 8px; background: #fff; border: 1px solid #c9cdd3; display: flex; justify-content: flex-end; }
.galbtns { width: 12px; display: flex; flex-direction: column; border-left: 1px solid #d5d8dc; }
.galbtns button { flex: 1; justify-content: center; border-bottom: 1px solid #d5d8dc; }
.galbtns .more { border: 1px solid #aaa; }
.cells .content { padding-left: 5px; }
.cells .big { width: 42px; }
.edit .content { padding-left: 8px; }
.edit .stack { width: 75px; }
.sigma { width: 13px; text-align: center; font: 700 13px "Liberation Serif", serif; }

.formula { display: flex; height: 54px; margin-top: 2px; border-top: 1px solid #7f8794; border-bottom: 1px solid #b5bac3; }
.namecol { width: 211px; background: #dce0e7; border-right: 1px solid #a3aab5; }
.namerow { display: flex; height: 19px; border-bottom: 1px solid #a3aab5; }
.namebox { width: 136px; display: flex; align-items: center; background: #fff; padding-right: 4px; border-left: 1px solid #7f8794; }
.namebox input { flex: 1; min-width: 0; border: 0; height: 16px; }
.fxzone { flex: 1; display: flex; justify-content: space-between; align-items: center; padding-right: 5px; border-left: 1px solid #9aa2ae; border-radius: 9px 0 0 9px; margin-left: 2px; }
.knob { width: 7px; height: 6px; margin-left: 3px; border-radius: 3px; background: #c6cad1; border-top: 1px solid #8e95a0; }
.fx { font: italic 700 14px "Liberation Serif", serif; }
.fx small { font-size: 11px; }
.fxinput { flex: 1; border: 0; resize: none; background: #fff; padding: 0; outline: 0; }
.fxscroll { width: 14px; background: #dce0e7; display: flex; flex-direction: column; border-left: 1px solid #b5bac3; }
.fxscroll button { height: 18px; justify-content: center; border-bottom: 1px solid #a3aab5; }
.fxscroll div { flex: 1; display: flex; flex-direction: column; align-items: center; justify-content: space-between; padding: 5px 0; }
.workspace { flex: 1; margin-top: 3px; border-top: 1px solid #7f8794; background: #e8ecf0; position: relative; }
.dialog { position: absolute; left: calc(50% - 136px); top: 241px; width: 281px; border: 1px solid #1d1b16; border-radius: 6px; padding: 0 5px 6px; background: linear-gradient(90deg, #d6d0c0, #cdc7b3 30%, #b9b095 50%, #cdc6b2 70%, #c6bfa8); box-shadow: inset 0 0 0 1px #efece2, 1px 3px 8px 3px rgba(30, 34, 40, .6); }
.dlgtitle { display: flex; justify-content: space-between; height: 24px; font-family: "Open Sans", "Noto Sans", sans-serif; }
.dlgtitle span { line-height: 24px; }
.dlgclose { width: 41px; height: 16px; justify-content: center; border: 1px solid #5b2a20; border-top: 0; border-radius: 0 0 4px 4px; background: linear-gradient(#e2a596, #c4402c 50%, #d9705a); }
.dlgbody { height: 73px; background: #f0f0f0; border: 1px solid #4f4c42; outline: 1px solid #f3f1e8; display: flex; flex-direction: column; align-items: center; padding: 11px 14px 0; }
.msg { display: flex; align-items: center; gap: 12px; align-self: stretch; }
.msg p { margin: 0; line-height: 14px; white-space: nowrap; color: #000; }
.ok { width: 78px; height: 19px; margin-top: 8px; justify-content: center; border: 1px solid #2c83b4; border-radius: 3px; box-shadow: inset 0 0 0 1px #5cc9f2; background: linear-gradient(#eef6fa, #dcebf3 50%, #bcd6e4 52%, #c8dee9); }
</style>
